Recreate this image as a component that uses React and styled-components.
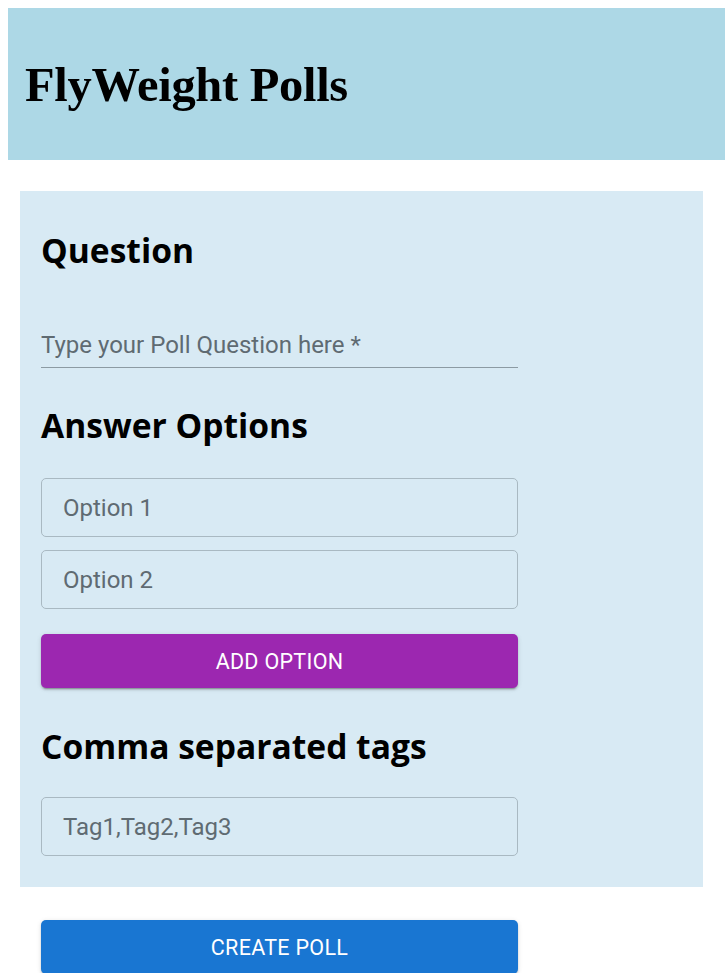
import React, { useState } from "react";
import styled, { createGlobalStyle } from "styled-components";

const GlobalStyle = createGlobalStyle`
  body {
    margin: 8px 0 0 8px;
    background: #ffffff;
    font-family: Roboto, "Liberation Sans", sans-serif;
    overflow: hidden;
  }
`;

const App = () => {
  const [question, setQuestion] = useState("");
  const [options, setOptions] = useState(["", ""]);
  const [tags, setTags] = useState("");

  const addOption = () => setOptions([...options, ""]);

  const updateOption = (index, value) => {
    setOptions(options.map((opt, i) => (i === index ? value : opt)));
  };

  return (
    <>
      <GlobalStyle />
      <Header>
        <Title>FlyWeight Polls</Title>
      </Header>
      <Panel>
        <SectionTitle>Question</SectionTitle>
        <StandardField>
          <StandardInput
            placeholder="Type your Poll Question here *"
            value={question}
            onChange={(e) => setQuestion(e.target.value)}
          />
        </StandardField>

        <SectionTitle $top={35}>Answer Options</SectionTitle>
        <OptionList>
          {options.map((opt, i) => (
            <OutlinedInput
              key={i}
              placeholder={`Option ${i + 1}`}
              value={opt}
              onChange={(e) => updateOption(i, e.target.value)}
            />
          ))}
        </OptionList>
        <Button $color="#9c27b0" onClick={addOption}>
          Add Option
        </Button>

        <SectionTitle $top={36}>Comma separated tags</SectionTitle>
        <OutlinedInput
          placeholder="Tag1,Tag2,Tag3"
          value={tags}
          onChange={(e) => setTags(e.target.value)}
        />
      </Panel>
      <Footer>
        <Button $color="#1976d2">Create Poll</Button>
      </Footer>
    </>
  );
};

export default App;

// Styled Components
const Header = styled.header`
  height: 152px;
  background: #add8e6;
  display: flex;
  align-items: center;
  padding-left: 17px;
`;

const Title = styled.h1`
  margin: 0;
  font-family: "Liberation Serif", "Times New Roman", serif;
  font-weight: 700;
  font-size: 48.5px;
  color: #000;
  letter-spacing: -0.3px;
`;

const Panel = styled.section`
  width: 683px;
  box-sizing: border-box;
  margin: 31px 0 0 12px;
  padding: 37px 21px 31px;
  background: #d8eaf4;
`;

const SectionTitle = styled.h2`
  margin: ${(p) => p.$top || 0}px 0 0;
  font-family: "Open Sans", "Noto Sans", sans-serif;
  font-weight: 700;
  font-size: 33.6px;
  line-height: 44px;
  color: #000;
`;

const StandardField = styled.div`
  width: 477px;
  margin-top: 52px;
  border-bottom: 1.5px solid #8c9ba3;
`;

const StandardInput = styled.input`
  display: block;
  width: 100%;
  height: 43px;
  box-sizing: border-box;
  border: none;
  background: transparent;
  padding: 7px 0 8px;
  font-family: Roboto, sans-serif;
  font-size: 24px;
  line-height: 28px;
  color: #333;
  outline: none;

  &::placeholder {
    color: #5f6b72;
  }
`;

const OptionList = styled.div`
  display: flex;
  flex-direction: column;
  gap: 13px;
  margin-top: 31px;
`;

const OutlinedInput = styled.input`
  display: block;
  width: 477px;
  height: 59px;
  box-sizing: border-box;
  border: 1px solid #a9b9c2;
  border-radius: 5px;
  background: transparent;
  padding: 0 21px;
  font-family: Roboto, sans-serif;
  font-size: 24px;
  color: #333;
  outline: none;

  &::placeholder {
    color: #5f6b72;
  }

  ${SectionTitle} + & {
    margin-top: 29px;
  }
`;

const Button = styled.button`
  display: block;
  width: 477px;
  height: 54px;
  margin-top: 25px;
  border: none;
  border-radius: 5px;
  background: ${(p) => p.$color};
  color: #fff;
  font-family: Roboto, sans-serif;
  font-weight: 400;
  font-size: 21.5px;
  letter-spacing: 0.3px;
  text-transform: uppercase;
  box-shadow: 0 3px 1px -2px rgba(0, 0, 0, 0.2), 0 2px 2px 0 rgba(0, 0, 0, 0.14),
    0 1px 5px 0 rgba(0, 0, 0, 0.12);
  cursor: pointer;
`;

const Footer = styled.div`
  padding: 8px 0 0 33px;
`;
